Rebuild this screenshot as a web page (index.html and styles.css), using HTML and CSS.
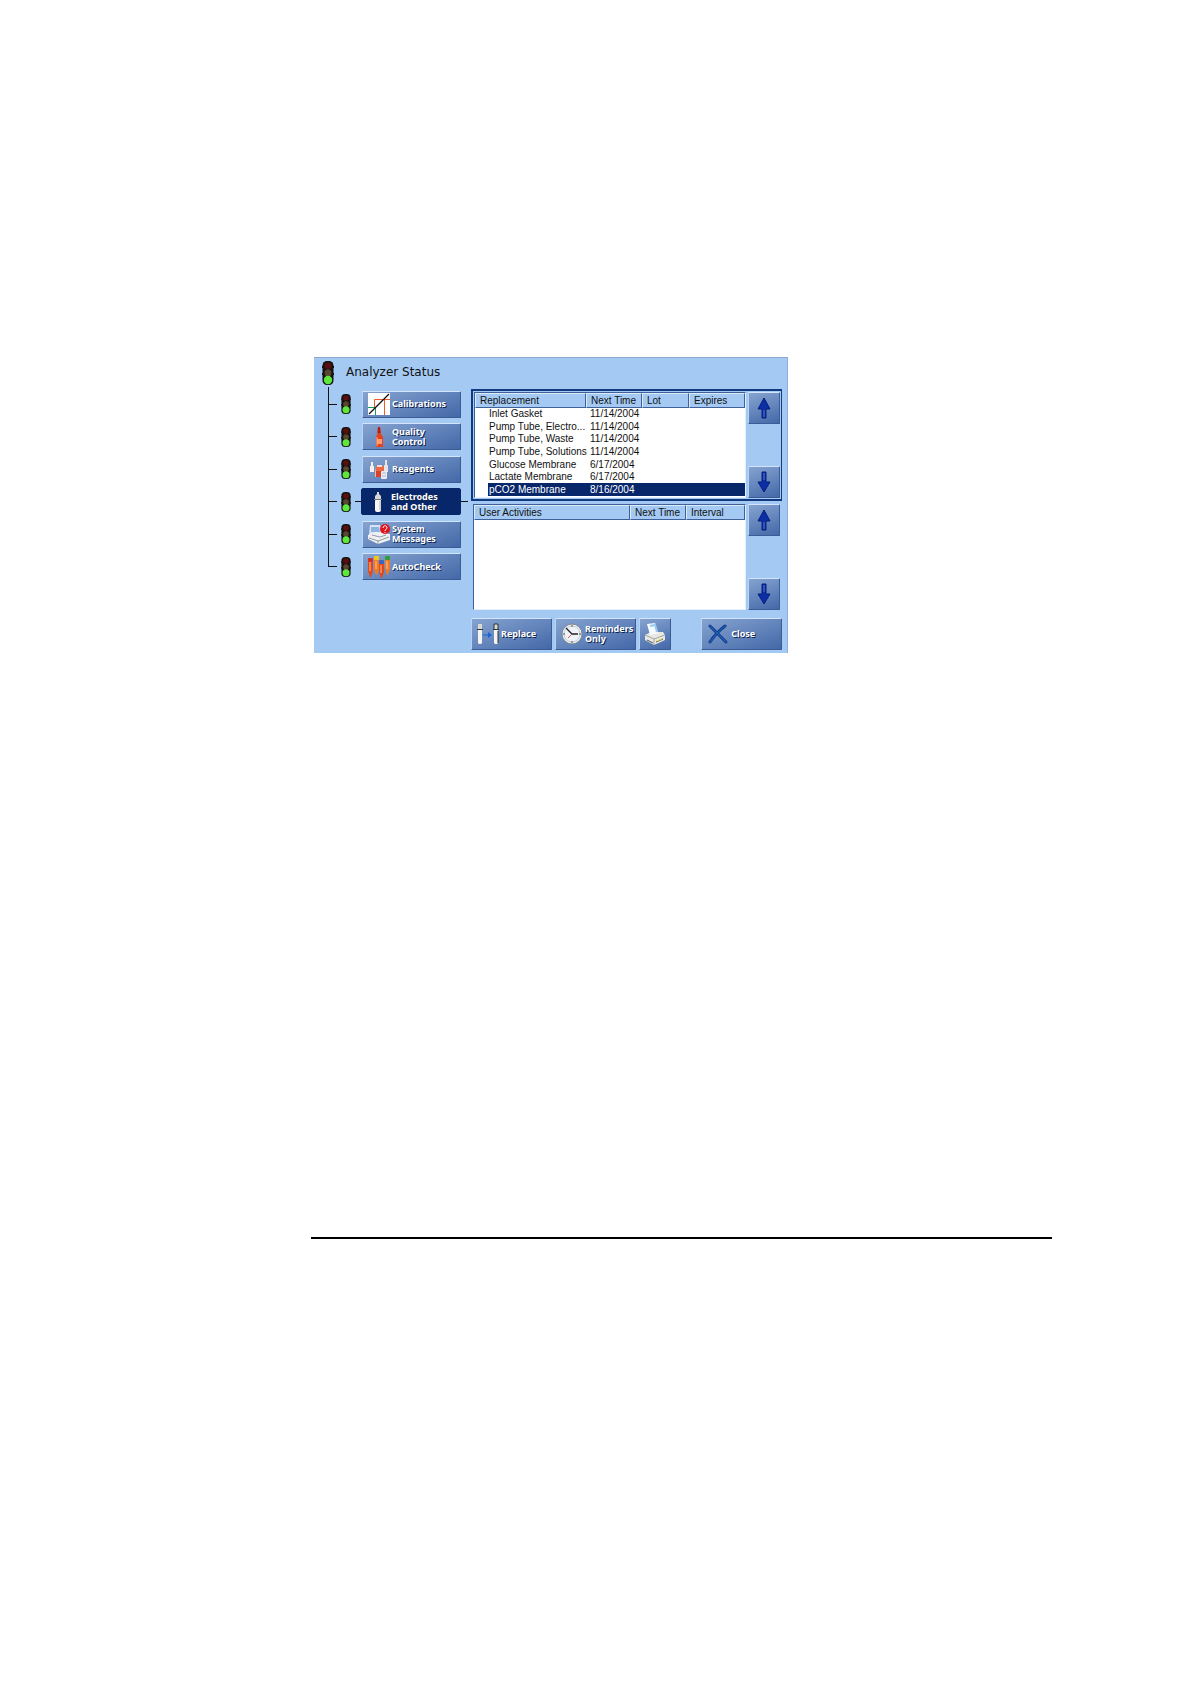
FILE: index.html
```html
<!DOCTYPE html>
<html lang="en">
<head>
    <meta charset="UTF-8">
    <meta name="viewport" content="width=device-width, initial-scale=1.0">
    <title>Analyzer Status</title>
    <link rel="stylesheet" href="styles.css">
</head>
<body>

    <!-- Shared icons -->
    <svg class="sprite" aria-hidden="true">
        <symbol id="light" viewBox="0 0 12 24">
            <rect x="0.5" y="0" width="11" height="24" rx="4.5" fill="#15130f"/>
            <path d="M0 6h1M11 6h1M0 13h1M11 13h1" stroke="#15130f" stroke-width="2"/>
            <circle cx="6" cy="4.8" r="3.4" fill="#5c0d10"/>
            <circle cx="6" cy="12" r="3.4" fill="#5a4630"/>
            <circle cx="6" cy="19" r="4.2" fill="#5fe63c"/>
        </symbol>
        <symbol id="arrow-up" viewBox="0 0 14 22">
            <path d="M7 1L13 12H9V21H5V12H1Z" fill="#0c2fa5" stroke="#071f7c"/>
            <path d="M7 13V20" stroke="#5878c8"/>
        </symbol>
        <symbol id="arrow-down" viewBox="0 0 14 22">
            <path d="M7 21L13 11H9V1H5V11H1Z" fill="#0c2fa5" stroke="#071f7c"/>
            <path d="M7 2V9" stroke="#5878c8"/>
        </symbol>
    </svg>

    <main class="page">
        <div class="window">
            <header class="title-bar">
                <svg class="light-big"><use href="#light"/></svg>
                <h1>Analyzer Status</h1>
            </header>

            <div class="content">
                <nav>
                    <ul class="tree">
                        <li>
                            <span class="tick"></span>
                            <svg class="light"><use href="#light"/></svg>
                            <button class="btn nav-btn" type="button">
                                <svg class="icon" viewBox="0 0 22 22">
                                    <rect width="22" height="22" fill="#fff"/>
                                    <path d="M6.500 14V6.500H22M11.500 6.500H16.500V22" fill="none" stroke="#ee5a2c"/>
                                    <path d="M0 14.500H7.500V22" fill="none" stroke="#1f9a58"/>
                                    <path d="M1 21L21 1" stroke="#111" stroke-width="1.3"/>
                                </svg>
                                <span>Calibrations</span>
                            </button>
                        </li>
                        <li>
                            <span class="tick"></span>
                            <svg class="light"><use href="#light"/></svg>
                            <button class="btn nav-btn" type="button">
                                <svg class="icon" viewBox="0 0 22 22">
                                    <path d="M10 1H12L13 8L15 11V21H8V11L9.500 8Z" fill="#e2421c"/>
                                    <path d="M10 1H12L12.500 7H9.500Z" fill="#b91d14"/>
                                    <rect x="9" y="13" width="5" height="5" fill="#ff9a70"/>
                                    <path d="M9 11V20" stroke="#ffb08e"/>
                                </svg>
                                <span>Quality<br>Control</span>
                            </button>
                        </li>
                        <li>
                            <span class="tick"></span>
                            <svg class="light"><use href="#light"/></svg>
                            <button class="btn nav-btn" type="button">
                                <svg class="icon" viewBox="0 0 22 22">
                                    <path d="M3 4H5V8H6V14H2V8H3Z" fill="#f3f0ee"/>
                                    <path d="M17 2H19V7H20V14H16V7H17Z" fill="#e6e3e4"/>
                                    <rect x="8" y="8" width="8" height="7" rx="1" fill="#ec6a43"/>
                                    <rect x="9" y="7" width="5" height="2" fill="#f7ded2"/>
                                    <path d="M7 9V19H10V14H8" fill="#f2b9a4"/>
                                    <path d="M8 13H13V19H8Z" fill="#d9422a"/>
                                    <rect x="13" y="13" width="6" height="8" rx="1" fill="#e9edf3"/>
                                    <path d="M14 15H18M14 18H18" stroke="#aeb8c8"/>
                                </svg>
                                <span>Reagents</span>
                            </button>
                        </li>
                        <li class="active">
                            <span class="tick"></span>
                            <svg class="light"><use href="#light"/></svg>
                            <span class="tick tick-in"></span>
                            <button class="btn nav-btn" type="button" aria-current="page">
                                <svg class="icon" viewBox="0 0 22 22">
                                    <path d="M10 1H12V3L14 5V8H8V5L10 3Z" fill="#d6d6d6"/>
                                    <rect x="8" y="8" width="6" height="13" rx="2" fill="#f6f6f4"/>
                                    <path d="M7 8.500H15" stroke="#777"/>
                                    <path d="M13 10V19" stroke="#a9adb2"/>
                                </svg>
                                <span>Electrodes<br>and Other</span>
                            </button>
                            <span class="tick tick-out"></span>
                        </li>
                        <li>
                            <span class="tick"></span>
                            <svg class="light"><use href="#light"/></svg>
                            <button class="btn nav-btn" type="button">
                                <svg class="icon" viewBox="0 0 22 22">
                                    <path d="M2 2H12L15 12H1Z" fill="#d5e4f4"/>
                                    <path d="M3 4H11L12 9H3Z" fill="#8db4df"/>
                                    <path d="M0 12L7 9L22 11V17L10 21L0 16Z" fill="#eef0f2"/>
                                    <path d="M1 15L10 18L21 14M10 18V21M4 12L12 14L18 12" fill="none" stroke="#929aa8"/>
                                    <circle cx="17" cy="6" r="5" fill="#e1131d"/>
                                    <path d="M15 5C15 2 19 2 19 5C19 6 17 6 17 8M17 9V10" fill="none" stroke="#fff"/>
                                </svg>
                                <span>System<br>Messages</span>
                            </button>
                        </li>
                        <li>
                            <span class="tick"></span>
                            <svg class="light"><use href="#light"/></svg>
                            <button class="btn nav-btn" type="button">
                                <svg class="icon" viewBox="0 0 22 22">
                                    <path d="M0 5H5V15L3 21H2L0 15Z" fill="#e2481c"/>
                                    <path d="M6 3H11V13L9 19H8L6 13Z" fill="#f07a28"/>
                                    <path d="M11 7H16V16L14 22H13L11 16Z" fill="#e2481c"/>
                                    <path d="M17 3H22V13L20 19H19L17 13Z" fill="#f07a28"/>
                                    <path d="M2 6V15M8 5V13M13 9V17M19 5V13" stroke="#ffc08a"/>
                                    <rect x="0" y="2" width="5" height="4" rx="1" fill="#d5331f"/>
                                    <rect x="6" y="0" width="5" height="4" rx="1" fill="#f2c61d"/>
                                    <rect x="11" y="4" width="5" height="4" rx="1" fill="#3768c8"/>
                                    <rect x="17" y="0" width="5" height="4" rx="1" fill="#2f9e3c"/>
                                </svg>
                                <span>AutoCheck</span>
                            </button>
                        </li>
                    </ul>
                </nav>

                <div class="lists">
                    <section class="list-panel selected">
                        <div class="list-box">
                            <table class="list">
                                <colgroup>
                                    <col class="col-name">
                                    <col class="col-time">
                                    <col class="col-lot">
                                    <col>
                                </colgroup>
                                <thead>
                                    <tr><th>Replacement</th><th>Next Time</th><th>Lot</th><th>Expires</th></tr>
                                </thead>
                                <tbody>
                                    <tr><td>Inlet Gasket</td><td>11/14/2004</td><td></td><td></td></tr>
                                    <tr><td>Pump Tube, Electro...</td><td>11/14/2004</td><td></td><td></td></tr>
                                    <tr><td>Pump Tube, Waste</td><td>11/14/2004</td><td></td><td></td></tr>
                                    <tr><td>Pump Tube, Solutions</td><td>11/14/2004</td><td></td><td></td></tr>
                                    <tr><td>Glucose Membrane</td><td>6/17/2004</td><td></td><td></td></tr>
                                    <tr><td>Lactate Membrane</td><td>6/17/2004</td><td></td><td></td></tr>
                                    <tr class="row-selected"><td>pCO2 Membrane</td><td>8/16/2004</td><td></td><td></td></tr>
                                </tbody>
                            </table>
                        </div>
                        <div class="scroll">
                            <button class="btn scroll-btn" type="button" aria-label="Scroll replacements up"><svg><use href="#arrow-up"/></svg></button>
                            <button class="btn scroll-btn" type="button" aria-label="Scroll replacements down"><svg><use href="#arrow-down"/></svg></button>
                        </div>
                    </section>

                    <section class="list-panel">
                        <div class="list-box">
                            <table class="list activities">
                                <colgroup>
                                    <col class="col-activity">
                                    <col class="col-time">
                                    <col>
                                </colgroup>
                                <thead>
                                    <tr><th>User Activities</th><th>Next Time</th><th>Interval</th></tr>
                                </thead>
                            </table>
                        </div>
                        <div class="scroll">
                            <button class="btn scroll-btn" type="button" aria-label="Scroll activities up"><svg><use href="#arrow-up"/></svg></button>
                            <button class="btn scroll-btn" type="button" aria-label="Scroll activities down"><svg><use href="#arrow-down"/></svg></button>
                        </div>
                    </section>

                    <footer class="actions">
                        <button class="btn action-btn" type="button">
                            <svg class="icon" viewBox="0 0 22 22">
                                <path d="M1 1H5V6H1ZM17 1H21V6H17Z" fill="#d8d8d4"/>
                                <path d="M1 7H5V20L4 21H2L1 20ZM17 7H21V20L20 21H18L17 20Z" fill="#f5f5f0"/>
                                <path d="M0 6.500H6M16 6.500H22" stroke="#333"/>
                                <path d="M17 6V1H21V6M21 8V20" fill="none" stroke="#333"/>
                                <path d="M6 12H12" stroke="#1565d8"/>
                                <path d="M11 9L15 12L11 15Z" fill="#1565d8"/>
                            </svg>
                            <span>Replace</span>
                        </button>
                        <button class="btn action-btn" type="button">
                            <svg class="icon" viewBox="0 0 22 22">
                                <circle cx="11" cy="11" r="10" fill="#eef3f7" stroke="#7f8791"/>
                                <circle cx="11" cy="11" r="8" fill="none" stroke="#c4cdd6"/>
                                <path d="M11 2V4M11 18V20M2 11H4M18 11H20" stroke="#555"/>
                                <path d="M5 5L11 11H17" fill="none" stroke="#222" stroke-width="1.3"/>
                                <path d="M11 11L7 15" stroke="#d25a50"/>
                            </svg>
                            <span>Reminders<br>Only</span>
                        </button>
                        <button class="btn print-btn" type="button" aria-label="Print">
                            <svg class="icon" viewBox="0 0 22 22">
                                <path d="M1 12L7 9L19 9L21 12V17L10 22L1 17Z" fill="#e9e9e4"/>
                                <path d="M1 12L10 16L21 12M10 16V22" fill="none" stroke="#a5a69f"/>
                                <path d="M3 1L11 0L14 10L6 12Z" fill="#f4faff"/>
                                <path d="M6 3L11 2L13 9" fill="none" stroke="#9ccaf0" stroke-width="2"/>
                                <path d="M3 17L9 20M12 19L19 16" stroke="#55564f"/>
                                <path d="M13 18L18 16" stroke="#d7d34c"/>
                            </svg>
                        </button>
                        <button class="btn action-btn close-btn" type="button">
                            <svg class="icon" viewBox="0 0 22 22">
                                <path d="M3 3L19 19M18 3Q9 10 3 19" fill="none" stroke="#123f8e" stroke-width="3" stroke-linecap="round"/>
                                <path d="M3 3L19 19M18 3Q9 10 3 19" fill="none" stroke="#2468c4" stroke-linecap="round"/>
                            </svg>
                            <span>Close</span>
                        </button>
                    </footer>
                </div>
            </div>
        </div>
        <hr class="page-rule">
    </main>

</body>
</html>
```
FILE: styles.css
```css
* {
    box-sizing: border-box;
}
body {
    margin: 0;
    background-color: #fff;
    font-family: "Liberation Sans", Arial, sans-serif;
    font-size: 10px;
    line-height: 12px;
    color: #111;
}
.sprite {
    display: none;
}
svg {
    display: block;
    flex: none;
}
.page {
    padding: 357px 138px 0 311px;
}
.window {
    width: 64%;
    min-width: 473px;
    margin-left: 3px;
    padding-bottom: 3px;
    background-color: #a4caf3;
    border-top: 1px solid #8ba9cf;
    border-right: 1px solid #8fb0dc;
}
.title-bar {
    display: flex;
    gap: 12px;
    height: 31px;
    padding: 3px 0 0 8px;
}
.light-big {
    width: 12px;
    height: 24px;
}
h1 {
    margin: 3px 0 0;
    font-family: "DejaVu Sans", Verdana, sans-serif;
    font-size: 12px;
    font-weight: normal;
    line-height: 16px;
}
.content {
    display: flex;
    gap: 3px;
    padding-right: 5px;
}

/* Status tree */
nav {
    flex: 0 0 154px;
}
.tree {
    position: relative;
    display: flex;
    flex-direction: column;
    justify-content: space-between;
    height: 191px;
    margin: 1px 0 0;
    padding: 0 0 0 14px;
    list-style: none;
}
.tree::before {
    content: "";
    position: absolute;
    left: 14px;
    top: -3px;
    bottom: 14px;
    width: 1px;
    background-color: #111;
}
.tree li {
    display: flex;
    align-items: center;
    height: 28px;
}
.tick {
    width: 9px;
    height: 1px;
    margin-right: 4px;
    background-color: #111;
}
.tick-in {
    width: 6px;
    margin: 0 0 0 -7px;
}
.tick-out {
    width: 7px;
    margin: 0;
}
.light {
    width: 10px;
    height: 20px;
    margin-right: 11px;
}

/* Buttons */
.btn {
    display: flex;
    align-items: center;
    padding: 0;
    border: 1px solid;
    border-color: #d3e5fa #3c5c95 #3c5c95 #b9d3f2;
    border-radius: 1px;
    background: linear-gradient(160deg, #86a3cf, #6586bd 50%, #4468a8);
    color: #fff;
    font-family: "Noto Sans", Tahoma, sans-serif;
    font-size: 9px;
    font-weight: bold;
    line-height: 10px;
    text-align: left;
    text-shadow: 1px 1px 0 #10254f;
    cursor: pointer;
}
.icon {
    width: 22px;
    height: 22px;
}
.nav-btn {
    width: 99px;
    height: 27px;
    padding-left: 5px;
    gap: 2px;
}
.active .nav-btn {
    width: 100px;
    border-color: #08276a;
    border-radius: 2px;
    background: #08276a;
}

/* Lists */
.lists {
    flex: 1;
}
.list-panel {
    display: flex;
    gap: 2px;
    padding: 3px 2px 0;
}
.list-panel.selected {
    padding: 1px;
    border: 2px solid #123a80;
    border-right-width: 1px;
}
.list-box {
    flex: 1;
    height: 106px;
    border: 1px solid;
    border-color: #40609a #e2effd #e2effd #40609a;
    background-color: #fff;
}
.list {
    width: 100%;
    height: 103px;
    table-layout: fixed;
    border-collapse: separate;
    border-spacing: 0;
}
.list.activities {
    height: auto;
}
.col-name {
    width: 111px;
}
.col-activity {
    width: 156px;
}
.col-time {
    width: 56px;
}
.col-lot {
    width: 47px;
}
.list th {
    height: 15px;
    padding: 0 0 0 4px;
    border: 1px solid;
    border-color: #dcebfc #40609a #40609a #dcebfc;
    background-color: #a4caf3;
    font-weight: normal;
    text-align: left;
}
.list td {
    padding: 0 0 0 4px;
    white-space: nowrap;
}
.list td:first-child {
    padding-left: 14px;
}
.row-selected td {
    background-color: #08276a;
    color: #fff;
}
.row-selected td:first-child {
    background: linear-gradient(to right, #fff 13px, #08276a 13px);
}
.scroll {
    display: flex;
    flex-direction: column;
    justify-content: space-between;
}
.scroll-btn {
    justify-content: center;
    width: 32px;
    height: 32px;
}
.scroll-btn svg {
    width: 14px;
    height: 22px;
}

/* Bottom buttons */
.actions {
    display: flex;
    gap: 3px;
    padding-top: 8px;
}
.action-btn {
    width: 81px;
    height: 32px;
    padding-left: 5px;
    gap: 2px;
}
.print-btn {
    justify-content: center;
    width: 32px;
    height: 32px;
}
.close-btn {
    margin-left: auto;
}

.page-rule {
    height: 2px;
    margin: 584px 0 0;
    border: none;
    background-color: #000;
}
```
